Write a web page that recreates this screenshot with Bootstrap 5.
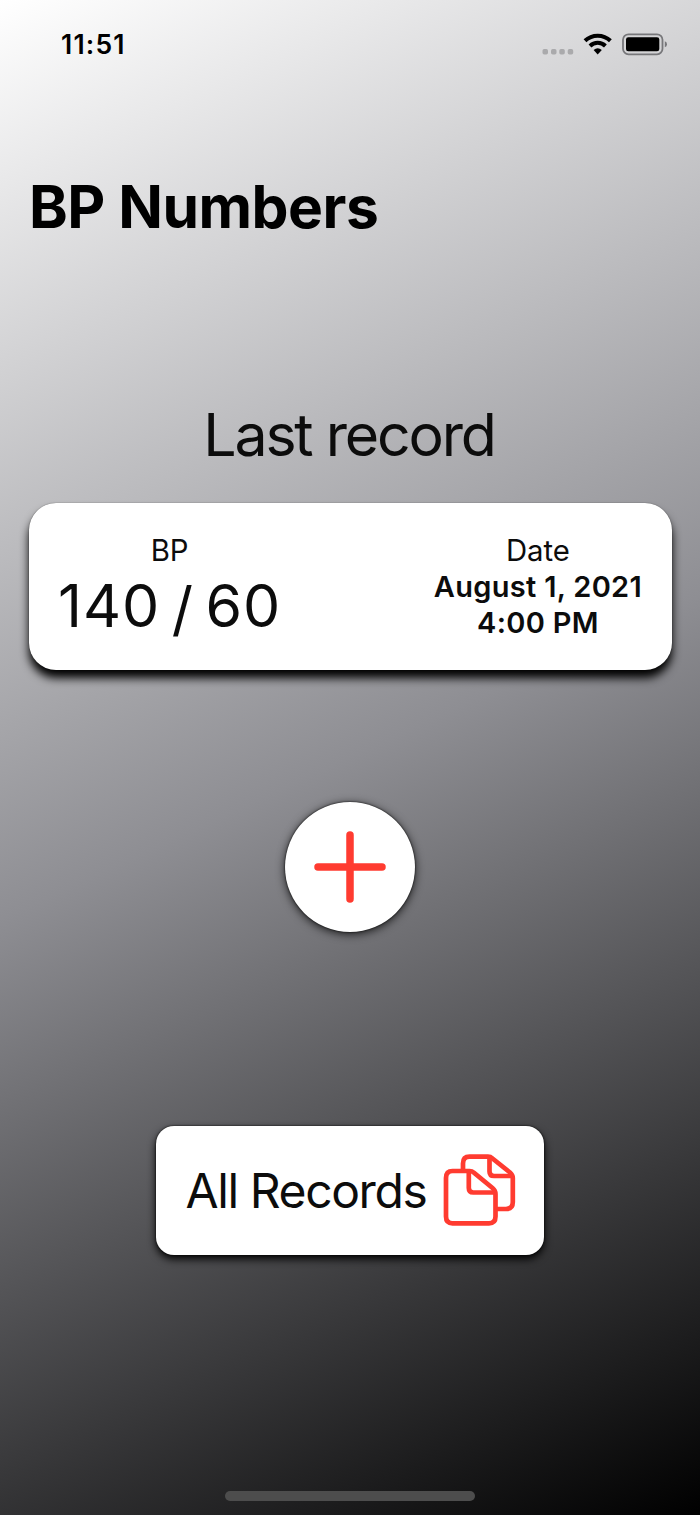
<!DOCTYPE html>
<html lang="en">
<head>
<meta charset="utf-8">
<meta name="viewport" content="width=device-width, initial-scale=1">
<title>BP Numbers</title>
<link href="https://cdn.jsdelivr.net/npm/bootstrap@5.3.0/dist/css/bootstrap.min.css" rel="stylesheet">
<style>
body{font-family:Inter,"Liberation Sans",sans-serif;color:#000}
.screen{height:1515px;background:linear-gradient(155.2deg,#fff 0%,#8e8e93 50%,#000 100%);white-space:nowrap}
.status-bar{height:88px;padding:0 33px 0 61px}
.clock{font-size:26.5px;font-weight:600;line-height:32px;letter-spacing:1.2px}
.page-title{font-size:58.7px;font-weight:700;line-height:72px;letter-spacing:-.5px;margin:83px 0 0 29px}
.last-title{font-size:59px;line-height:72px;letter-spacing:-2.2px;margin-top:156px;padding-right:2px}
.ink{color:#0c0c0c}
.record-card{margin:32px 28.5px 0;height:167px;border-radius:27px;padding:1px 29.5px 0 29.5px;box-shadow:0 0 1px rgba(0,0,0,.7),0 8px 10px #000}
.label-text{font-size:29.3px;line-height:36px}
.reading{font-size:59px;line-height:73px;letter-spacing:.9px;word-spacing:-5.8px}
.slash{line-height:1;vertical-align:-3px}
.date-text{font-size:29px;font-weight:600;line-height:36.4px;letter-spacing:.3px}
.add-btn{width:130px;height:130px;margin-top:132px;box-shadow:0 0 2px #000,0 2px 10px rgba(0,0,0,.8)}
.all-btn{width:388px;height:129px;margin-top:194px;border-radius:18px;padding:0 28px 0 29.5px;box-shadow:0 0 2px #000,0 4px 8px #000}
.all-text{font-size:48px;line-height:60px;letter-spacing:-1.4px}
.home-bar{width:250px;height:10px;background:#4d4d4d;margin-bottom:14px}
</style>
</head>
<body>
<main class="screen d-flex flex-column">
  <header class="status-bar d-flex align-items-center justify-content-between">
    <span class="clock">11:51</span>
    <svg width="126" height="30" viewBox="541 29 126 30" aria-hidden="true">
      <g fill="#aaaaac"><rect x="542.5" y="49" width="5.5" height="5.5" rx="1.7"/><rect x="551" y="49" width="5.5" height="5.5" rx="1.7"/><rect x="559.3" y="49" width="5.5" height="5.5" rx="1.7"/><rect x="567.7" y="49" width="5.5" height="5.5" rx="1.7"/></g>
      <g fill="none" stroke="#000" stroke-width="4"><path d="M585 40.8A18.2 18.2 0 0 1 610.400 40.8"/><path d="M590 46A11 11 0 0 1 605.400 46"/></g>
      <path d="M593.600 50Q597.700 46.600 601.800 50L597.700 54.400Z"/>
      <rect x="623" y="34.300" width="39.500" height="20" rx="5.500" fill="none" stroke="#77777a" stroke-width="1.800"/>
      <rect x="626" y="37.200" width="33.300" height="14" rx="2.300"/>
      <path d="M664.800 41.300Q667 42 667 44.300T664.800 47.300Z" fill="#77777a"/>
    </svg>
  </header>
  <h1 class="page-title mb-0">BP Numbers</h1>
  <h2 class="last-title mb-0 text-center fw-normal ink">Last record</h2>
  <section class="record-card bg-white d-flex justify-content-between align-items-center text-center ink">
    <div class="d-flex flex-column">
      <span class="label-text">BP</span>
      <span class="reading">140 <span class="slash">/</span> 60</span>
    </div>
    <div class="d-flex flex-column">
      <span class="label-text">Date</span>
      <span class="date-text">August 1, 2021</span>
      <span class="date-text">4:00 PM</span>
    </div>
  </section>
  <button class="add-btn btn bg-white rounded-circle border-0 p-0 align-self-center d-flex align-items-center justify-content-center" aria-label="Add record">
    <svg width="72" height="72" viewBox="0 0 72 72" fill="none" stroke="#ff3b30" stroke-width="7.500" stroke-linecap="round"><path d="M36 4V68M4 36H68"/></svg>
  </button>
  <button class="all-btn btn bg-white border-0 align-self-center d-flex align-items-center justify-content-between ink">
    <span class="all-text">All Records</span>
    <svg width="73" height="73" viewBox="443 1154 73 73" fill="none" stroke="#ff3b30" stroke-width="4.700" stroke-linejoin="round" aria-hidden="true">
      <path d="M463 1170V1163.500Q463 1156.700 469.500 1156.700H488Q490.500 1156.700 492.500 1158.500L510 1172.500Q512.800 1175 512.800 1178V1202Q512.800 1209 506 1209H497"/>
      <path d="M489.500 1157V1171.500Q489.500 1176 494 1176H512"/>
      <path d="M452.500 1171H469.500Q472 1171 474 1172.700L492.500 1188Q495.500 1190.500 495.500 1194V1216.500Q495.500 1223.300 489 1223.300H452.500Q446 1223.300 446 1216.500V1178Q446 1171 452.500 1171Z"/>
      <path d="M468.800 1171.500V1188Q468.800 1192.500 473.300 1192.500H495"/>
    </svg>
  </button>
  <div class="home-bar rounded-pill align-self-center mt-auto"></div>
</main>
<script src="https://cdn.jsdelivr.net/npm/bootstrap@5.3.0/dist/js/bootstrap.bundle.min.js"></script>
</body>
</html>
